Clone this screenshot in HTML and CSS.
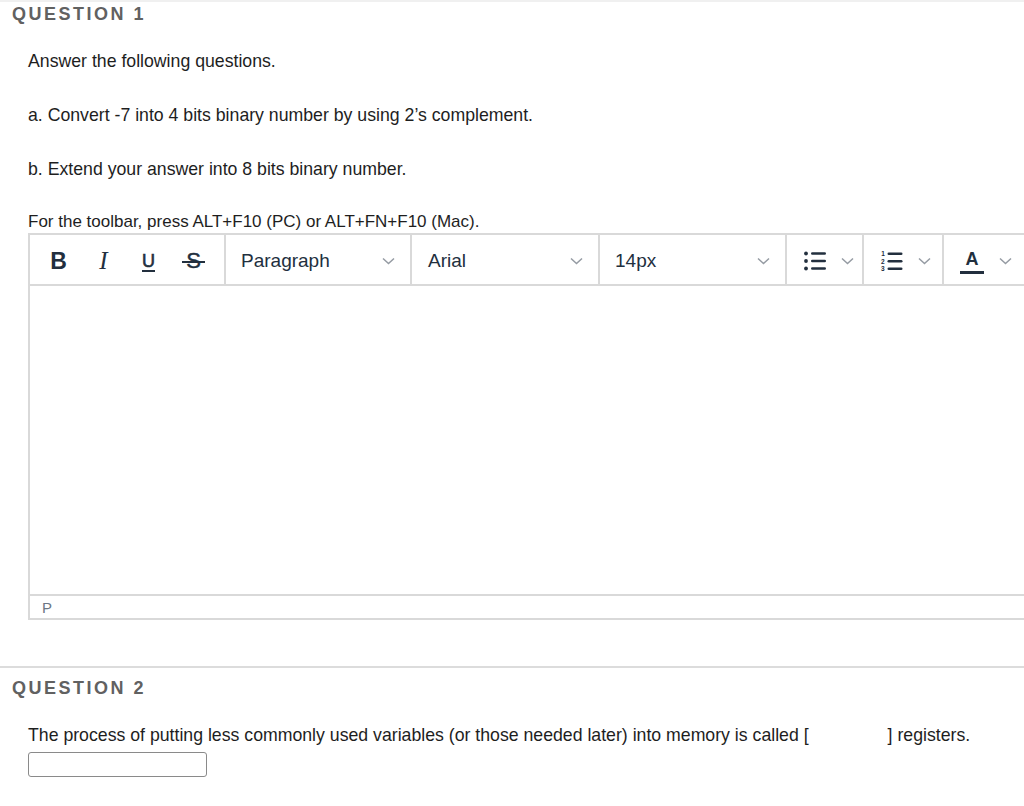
FILE: index.html
```html
<!DOCTYPE html>
<html>
<head>
<meta charset="utf-8">
<title>Questions</title>
<link rel="stylesheet" href="styles.css">
</head>
<body>
<section class="question q1">
  <h2 class="qhead">QUESTION 1</h2>
  <div class="qbody">
    <p class="intro">Answer the following questions.</p>
    <p class="para">a. Convert -7 into 4 bits binary number by using 2’s complement.</p>
    <p class="para">b. Extend your answer into 8 bits binary number.</p>
    <p class="hint">For the toolbar, press ALT+F10 (PC) or ALT+FN+F10 (Mac).</p>
    <div class="editor">
      <div class="toolbar">
        <div class="group fmt">
          <span class="btn b">B</span>
          <span class="btn i">I</span>
          <span class="btn u">U</span>
          <span class="btn s"><span class="sglyph">S</span></span>
        </div>
        <div class="group dd w-para"><span class="ddtext">Paragraph</span><svg class="chev" width="13" height="8" viewBox="0 0 13 8"><polyline points="1,1.5 6.5,6.5 12,1.5"/></svg></div>
        <div class="group dd w-font"><span class="ddtext">Arial</span><svg class="chev" width="13" height="8" viewBox="0 0 13 8"><polyline points="1,1.5 6.5,6.5 12,1.5"/></svg></div>
        <div class="group dd w-size"><span class="ddtext">14px</span><svg class="chev" width="13" height="8" viewBox="0 0 13 8"><polyline points="1,1.5 6.5,6.5 12,1.5"/></svg></div>
        <div class="group ic w-bul">
          <svg class="icon" width="24" height="20" viewBox="0 0 24 20">
            <circle cx="3" cy="2.5" r="1.9"/><circle cx="3" cy="10" r="1.9"/><circle cx="3" cy="17.5" r="1.9"/>
            <rect x="8" y="1.2" width="15" height="2.6" rx="1.3"/><rect x="8" y="8.7" width="15" height="2.6" rx="1.3"/><rect x="8" y="16.2" width="15" height="2.6" rx="1.3"/>
          </svg>
          <svg class="chev" width="13" height="8" viewBox="0 0 13 8"><polyline points="1,1.5 6.5,6.5 12,1.5"/></svg>
        </div>
        <div class="group ic w-num">
          <svg class="icon" width="24" height="20" viewBox="0 0 24 20">
            <text x="1.2" y="5" class="num">1</text><text x="1" y="12.5" class="num">2</text><text x="1" y="20" class="num">3</text>
            <rect x="7.5" y="1.5" width="15" height="2.6" rx="1.3"/><rect x="7.5" y="9" width="15" height="2.6" rx="1.3"/><rect x="7.5" y="16.5" width="15" height="2.6" rx="1.3"/>
          </svg>
          <svg class="chev" width="13" height="8" viewBox="0 0 13 8"><polyline points="1,1.5 6.5,6.5 12,1.5"/></svg>
        </div>
        <div class="group ic w-color">
          <span class="acolor"><span class="aletter">A</span><span class="abar"></span></span>
          <svg class="chev" width="13" height="8" viewBox="0 0 13 8"><polyline points="1,1.5 6.5,6.5 12,1.5"/></svg>
        </div>
      </div>
      <div class="editarea"></div>
      <div class="statusbar"><span class="path">P</span></div>
    </div>
  </div>
</section>
<section class="question q2">
  <h2 class="qhead">QUESTION 2</h2>
  <div class="qbody">
    <p class="q2text">The process of putting less commonly used variables (or those needed later) into memory is called [<span class="gap"></span>] registers.</p>
    <div class="answerbox"></div>
  </div>
</section>
</body>
</html>
```

FILE: styles.css
```css
html, body {
  margin: 0;
  padding: 0;
  background: #ffffff;
  overflow: hidden;
}

body {
  font-family: "Liberation Sans", Arial, Helvetica, sans-serif;
  color: #1e1e1e;
}

.q1 {
  border-top: 2px solid #f0f0f0;
}

.qhead {
  margin: 0;
  padding-left: 12px;
  font-size: 18px;
  line-height: 24px;
  font-weight: bold;
  letter-spacing: 2.5px;
  color: #616161;
}

.qbody {
  padding-left: 28px;
}

.qbody p {
  margin: 0;
  font-size: 17.7px;
  line-height: 24px;
}

.intro {
  margin-top: 23px !important;
}

.para {
  margin-top: 30px !important;
}

.hint {
  margin-top: 30px !important;
  line-height: 22px !important;
  font-size: 17px !important;
}

/* editor */
.editor {
  width: 1100px;
  border: 2px solid #d9d9d9;
  border-right: none;
}

.toolbar {
  display: flex;
  height: 49px;
  border-bottom: 2px solid #d9d9d9;
  color: #222f3e;
}

.group {
  display: flex;
  align-items: center;
  border-right: 2px solid #d9d9d9;
  box-sizing: border-box;
  height: 100%;
  padding-top: 3px;
}

.fmt {
  width: 196px;
  padding-left: 6px;
}

.btn {
  width: 45px;
  text-align: center;
  color: #222f3e;
}

.btn.b {
  font-weight: bold;
  font-size: 23px;
}

.btn.i {
  font-family: "Liberation Serif", "Times New Roman", serif;
  font-style: italic;
  font-size: 25px;
}

.btn.u {
  font-size: 18px;
  text-decoration: underline;
  text-decoration-thickness: 2px;
  text-underline-offset: 3px;
  -webkit-text-stroke: 0.6px #222f3e;
}

.btn.s {
  font-size: 22px;
}

.sglyph {
  position: relative;
  display: inline-block;
  -webkit-text-stroke: 0.4px #222f3e;
}

.sglyph::after {
  content: "";
  position: absolute;
  left: -4px;
  right: -4px;
  top: 50%;
  height: 2px;
  margin-top: 0px;
  background: #222f3e;
}

.dd {
  justify-content: space-between;
  padding: 3px 15px 0 15px;
}

.w-para { width: 186px; }
.w-font { width: 188px; padding-left: 16px; }
.w-size { width: 187px; }

.ddtext {
  font-size: 19px;
  color: #222f3e;
}

.chev polyline {
  fill: none;
  stroke: #959ba3;
  stroke-width: 1.5;
}

.ic {
  padding-left: 16px;
}

.w-bul { width: 77px; }
.w-num { width: 80px; }
.w-color { width: 120px; border-right: none; }

.ic .icon {
  fill: #222f3e;
  margin-right: 14px;
}

.num {
  font-family: "Liberation Sans", Arial, sans-serif;
  font-weight: bold;
  font-size: 6.5px;
  fill: #222f3e;
}

.acolor {
  display: flex;
  flex-direction: column;
  align-items: center;
  width: 24px;
  margin-right: 15px;
  padding-top: 2px;
}

.aletter {
  font-size: 18px;
  font-weight: bold;
  line-height: 18px;
  color: #222f3e;
}

.abar {
  display: block;
  width: 24px;
  height: 3px;
  margin-top: 3px;
  background: #222f3e;
}

.editarea {
  height: 308px;
}

.statusbar {
  height: 22px;
  border-top: 2px solid #d9d9d9;
  display: flex;
  align-items: center;
  padding-left: 12px;
}

.path {
  font-size: 15px;
  color: #6b7785;
}

/* question 2 */
.q2 {
  margin-top: 46px;
  border-top: 2px solid #dcdcdc;
}

.q2 .qhead {
  margin-top: 8px;
}

.q2text {
  margin-top: 23px !important;
}

.gap {
  display: inline-block;
  width: 79px;
}

.answerbox {
  margin-top: 5px;
  width: 177px;
  height: 23px;
  border: 1px solid #8a8a8a;
  border-radius: 3px;
}
```
